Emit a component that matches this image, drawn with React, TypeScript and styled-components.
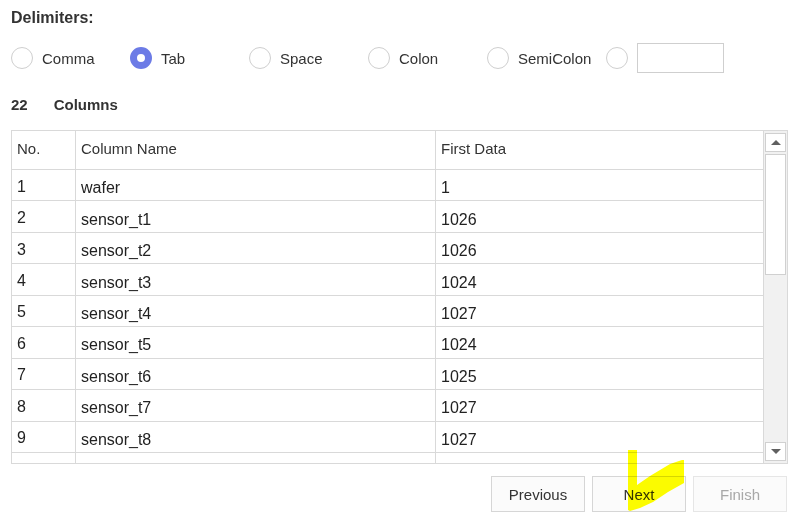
import React from "react";
import styled, { createGlobalStyle } from "styled-components";

const GlobalStyle = createGlobalStyle`
  html, body { margin: 0; padding: 0; background: #ffffff; }
  body { font-family: "Liberation Sans", Arial, sans-serif; color: #333333; }
  * { box-sizing: border-box; }
`;

const Page = styled.div`
  position: relative;
  width: 803px;
  height: 529px;
  padding: 0 16px 0 11px;
  display: flex;
  flex-direction: column;
`;

const Title = styled.div`
  height: 34px;
  line-height: 36px;
  font-size: 16px;
  font-weight: bold;
  color: #333;
`;

const RadioRow = styled.div`
  height: 48px;
  display: flex;
  align-items: center;
`;

const RadioOption = styled.label<{ $last?: boolean }>`
  width: ${(p) => (p.$last ? "auto" : "119px")};
  display: flex;
  align-items: center;
  gap: 9px;
  font-size: 15px;
  color: #333;
`;

const RadioCircle = styled.span<{ $checked?: boolean }>`
  width: 22px;
  height: 22px;
  border-radius: 50%;
  flex: none;
  background: #fff;
  border: ${(p) => (p.$checked ? "7px solid #6c7be6" : "1.5px solid #cfcfcf")};
`;

const TextBox = styled.div`
  width: 87px;
  height: 30px;
  border: 1px solid #cfcfcf;
  background: #fff;
`;

const ColumnsRow = styled.div`
  height: 46px;
  line-height: 46px;
  font-size: 15px;
  font-weight: bold;
  display: flex;
  gap: 26px;
  margin-bottom: 2px;
`;

const TableFrame = styled.div`
  width: 777px;
  height: 334px;
  border: 1px solid #d9d9d9;
  display: flex;
  flex: none;
`;

const Viewport = styled.div`
  width: 752px;
  height: 100%;
  overflow: hidden;
  border-right: 1px solid #d9d9d9;
`;

const Grid = styled.div`
  display: grid;
  grid-template-columns: 64px 360px 327px;
`;

const HeadCell = styled.div`
  height: 39px;
  display: flex;
  align-items: center;
  padding-left: 5px;
  padding-bottom: 4px;
  font-size: 15px;
  color: #333;
  border-bottom: 1px solid #d9d9d9;
  border-right: 1px solid #d9d9d9;
  &:nth-child(3n) { border-right: none; }
`;

const Cell = styled.div<{ $num?: boolean }>`
  height: 31.44px;
  display: flex;
  align-items: center;
  padding-left: 5px;
  padding-top: 6px;
  padding-bottom: ${(p) => (p.$num ? "3px" : "0")};
  font-size: 16px;
  color: #222;
  border-bottom: 1px solid #d9d9d9;
  border-right: 1px solid #d9d9d9;
  &:nth-child(3n) { border-right: none; }
`;

const Scrollbar = styled.div`
  width: 23px;
  background: #f1f1f1;
  padding: 2px 1px 2px 1px;
  display: flex;
  flex-direction: column;
  gap: 2px;
`;

const ScrollButton = styled.div`
  height: 19px;
  background: #fff;
  border: 1px solid #d0d0d0;
  display: flex;
  align-items: center;
  justify-content: center;
`;

const Thumb = styled.div`
  height: 121px;
  background: #fff;
  border: 1px solid #d0d0d0;
`;

const Track = styled.div`
  flex: 1;
`;

const Arrow = styled.span<{ $down?: boolean }>`
  width: 0;
  height: 0;
  border-left: 5px solid transparent;
  border-right: 5px solid transparent;
  ${(p) =>
    p.$down ? "border-top: 5px solid #606060;" : "border-bottom: 5px solid #606060;"}
`;

const ButtonBar = styled.div`
  margin-top: 12px;
  display: flex;
  justify-content: flex-end;
  gap: 7px;
  width: 776px;
`;

const Button = styled.div<{ $disabled?: boolean }>`
  width: 94px;
  height: 36px;
  display: flex;
  align-items: center;
  justify-content: center;
  font-size: 15px;
  background: #fbfbfb;
  color: ${(p) => (p.$disabled ? "#a8a8a8" : "#333")};
  border: 1px solid ${(p) => (p.$disabled ? "#e6e6e6" : "#d6d6d6")};
`;

const Marker = styled.svg`
  position: absolute;
  left: 0;
  top: 0;
  pointer-events: none;
  mix-blend-mode: multiply;
`;

const options = ["Comma", "Tab", "Space", "Colon", "SemiColon"];

const rows: [number, string, string][] = [
  [1, "wafer", "1"],
  [2, "sensor_t1", "1026"],
  [3, "sensor_t2", "1026"],
  [4, "sensor_t3", "1024"],
  [5, "sensor_t4", "1027"],
  [6, "sensor_t5", "1024"],
  [7, "sensor_t6", "1025"],
  [8, "sensor_t7", "1027"],
  [9, "sensor_t8", "1027"],
  [10, "sensor_t9", "1026"],
];

export default function App() {
  return (
    <>
      <GlobalStyle />
      <Page>
        <Title>Delimiters:</Title>
        <RadioRow>
          {options.map((o) => (
            <RadioOption key={o}>
              <RadioCircle $checked={o === "Tab"} />
              {o}
            </RadioOption>
          ))}
          <RadioOption $last>
            <RadioCircle />
            <TextBox />
          </RadioOption>
        </RadioRow>
        <ColumnsRow>
          <span>22</span>
          <span>Columns</span>
        </ColumnsRow>
        <TableFrame>
          <Viewport>
            <Grid>
              <HeadCell>No.</HeadCell>
              <HeadCell>Column Name</HeadCell>
              <HeadCell>First Data</HeadCell>
              {rows.map(([n, name, first]) => (
                <React.Fragment key={n}>
                  <Cell $num>{n}</Cell>
                  <Cell>{name}</Cell>
                  <Cell>{first}</Cell>
                </React.Fragment>
              ))}
            </Grid>
          </Viewport>
          <Scrollbar>
            <ScrollButton>
              <Arrow />
            </ScrollButton>
            <Thumb />
            <Track />
            <ScrollButton>
              <Arrow $down />
            </ScrollButton>
          </Scrollbar>
        </TableFrame>
        <ButtonBar>
          <Button>Previous</Button>
          <Button>Next</Button>
          <Button $disabled>Finish</Button>
        </ButtonBar>
        <Marker width="803" height="529" viewBox="0 0 803 529">
          <polygon
            fill="#ffff00"
            points="628,450 637,450 637,485 650,476 670,464 682,460 684,460 684,483 668,492 653,502 640,508 630,511 628,510"
          />
        </Marker>
      </Page>
    </>
  );
}
